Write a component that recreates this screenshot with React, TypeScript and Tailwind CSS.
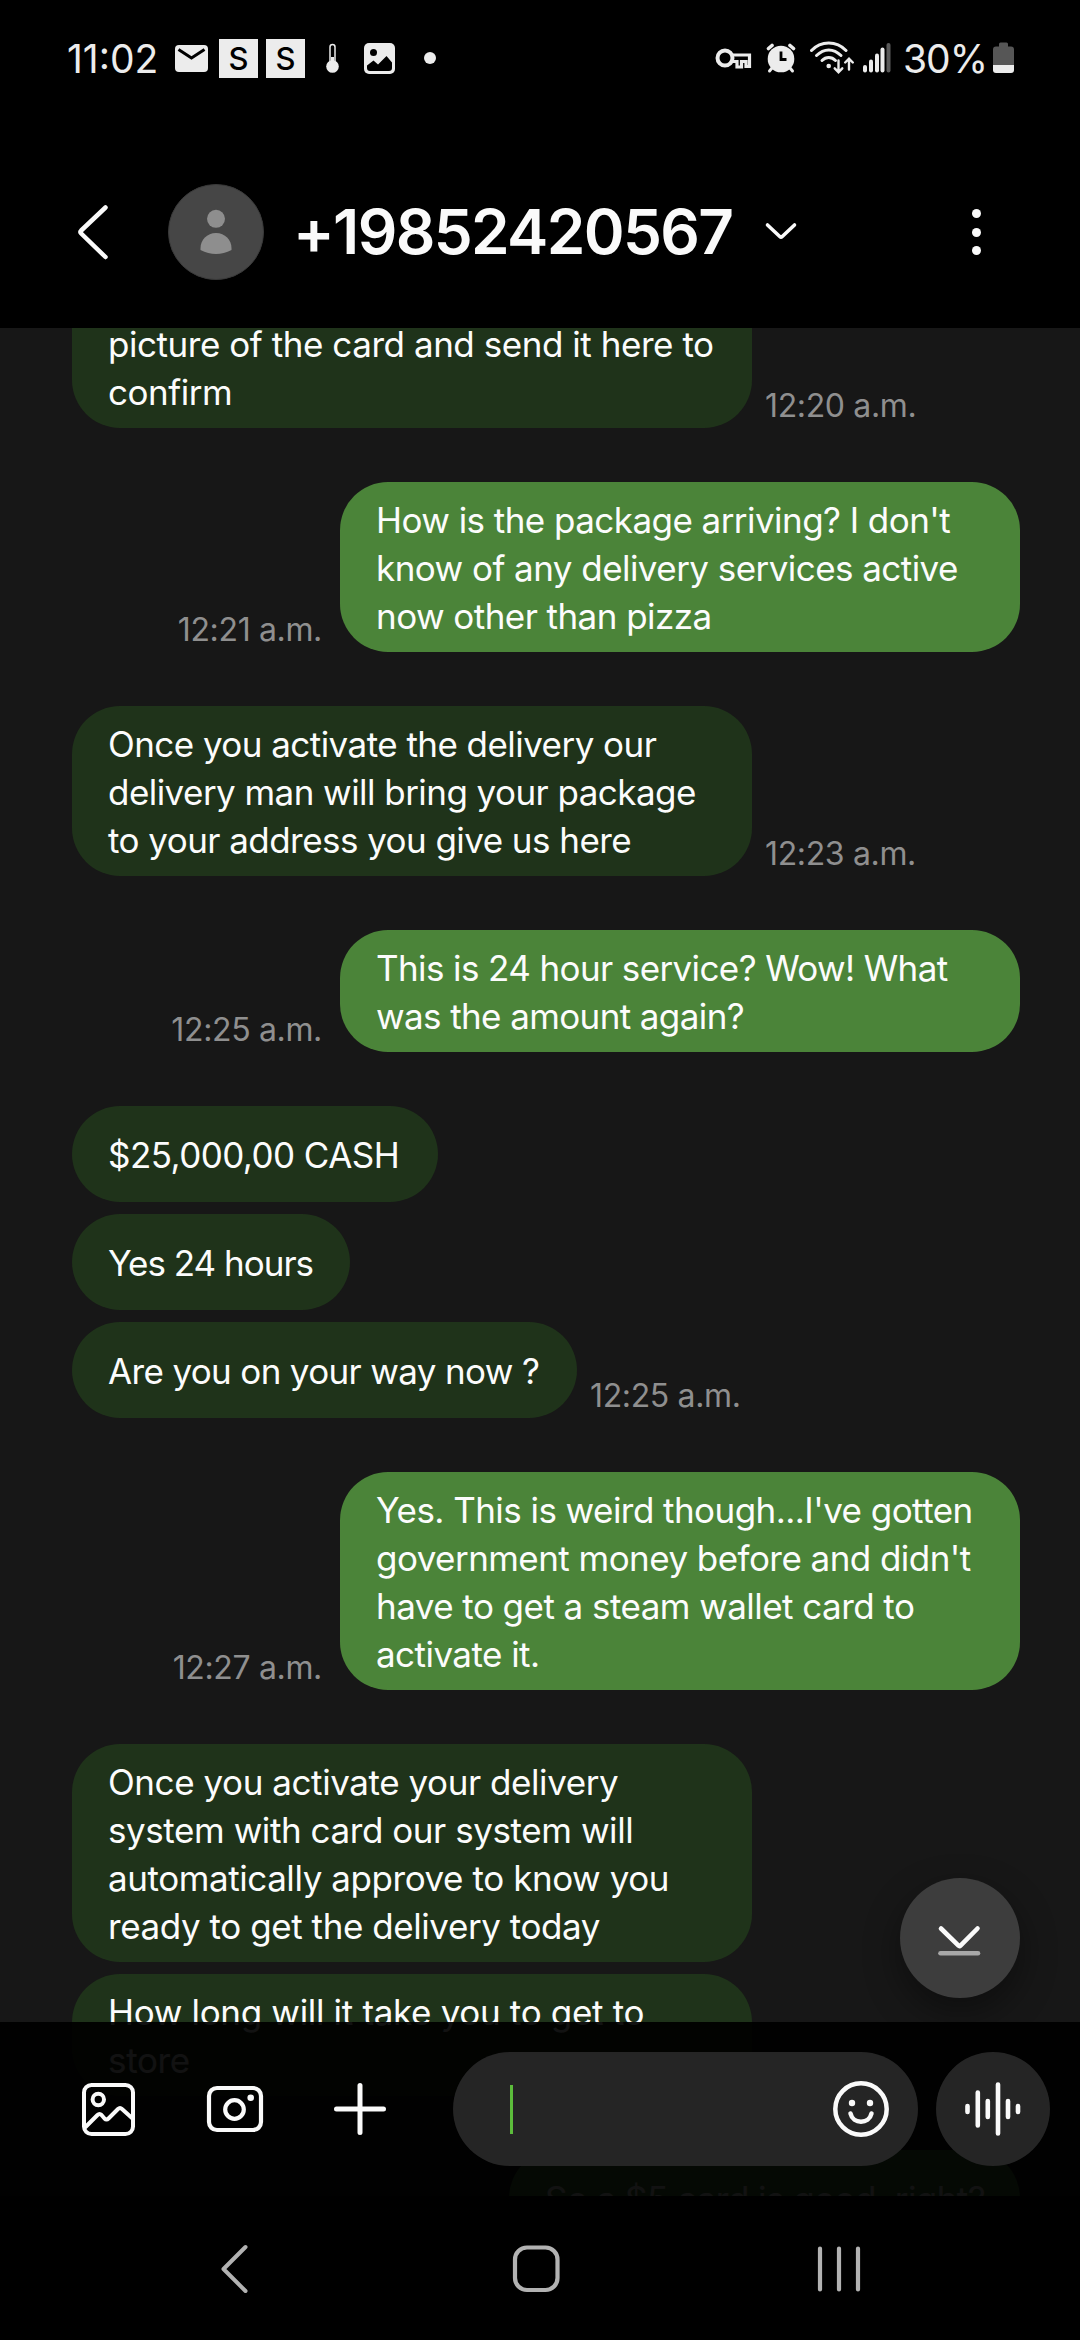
import clsx from "clsx";

type Message = {
  lines: string[];
  width: string;
  tracking?: string;
  time?: string;
};

type Group = {
  sent?: boolean;
  messages: Message[];
};

const WIDE = "w-[680px]";

const conversation: Group[] = [
  {
    messages: [
      {
        lines: ["picture of the card and send it here to", "confirm"],
        width: "w-[680px] rounded-t-none",
        tracking: "tracking-[-0.45px]",
        time: "12:20 a.m.",
      },
    ],
  },
  {
    sent: true,
    messages: [
      {
        lines: [
          "How is the package arriving? I don't",
          "know of any delivery services active",
          "now other than pizza",
        ],
        width: WIDE,
        time: "12:21 a.m.",
      },
    ],
  },
  {
    messages: [
      {
        lines: [
          "Once you activate the delivery our",
          "delivery man will bring your package",
          "to your address you give us here",
        ],
        width: WIDE,
        time: "12:23 a.m.",
      },
    ],
  },
  {
    sent: true,
    messages: [
      {
        lines: ["This is 24 hour service? Wow! What", "was the amount again?"],
        width: WIDE,
        tracking: "tracking-[-0.61px]",
        time: "12:25 a.m.",
      },
    ],
  },
  {
    messages: [
      { lines: ["$25,000,00 CASH"], width: "w-[366px]" },
      { lines: ["Yes 24 hours"], width: "w-[278px]", tracking: "tracking-[-1px]" },
      {
        lines: ["Are you on your way now ?"],
        width: "w-[505px]",
        tracking: "tracking-[-0.65px]",
        time: "12:25 a.m.",
      },
    ],
  },
  {
    sent: true,
    messages: [
      {
        lines: [
          "Yes. This is weird though...I've gotten",
          "government money before and didn't",
          "have to get a steam wallet card to",
          "activate it.",
        ],
        width: WIDE,
        time: "12:27 a.m.",
      },
    ],
  },
  {
    messages: [
      {
        lines: [
          "Once you activate your delivery",
          "system with card our system will",
          "automatically approve to know you",
          "ready to get the delivery today",
        ],
        width: WIDE,
        tracking: "tracking-[-0.43px]",
      },
      {
        lines: ["How long will it take you to get to", "store"],
        width: WIDE,
        tracking: "tracking-[-0.33px]",
      },
    ],
  },
  {
    sent: true,
    messages: [{ lines: ["So a $5 card is good, right?"], width: "w-[511px]" }],
  },
];

function Bubble({ message, sent }: { message: Message; sent?: boolean }) {
  return (
    <div className={clsx("flex items-end", sent ? "flex-row-reverse gap-[18px]" : "gap-[13px]")}>
      <div
        className={clsx(
          "flex min-h-24 flex-col justify-center rounded-[48px] pt-[14px] pb-3 pl-9 text-[35px] leading-[48px] whitespace-nowrap text-[#fcfcfc]",
          sent ? "bg-[#4b8439]" : "bg-[#1f331a]",
          message.tracking ?? "tracking-[-0.55px]",
          message.width,
        )}
      >
        {message.lines.map((line) => (
          <p key={line}>{line}</p>
        ))}
      </div>
      {message.time && (
        <span className="pb-[2px] text-[32px] leading-10 tracking-[-0.35px] text-[#8f8f8f]">
          {message.time}
        </span>
      )}
    </div>
  );
}

function StatusBar() {
  return (
    <div className="flex h-[116px] items-center pr-[66px] pl-[67px] text-[#ececec]">
      <span className="w-[92px] text-[39px] leading-none">11:02</span>
      <svg className="ml-4 h-10 w-[33px]" viewBox="0 0 33 40" fill="none">
        <rect y="7" width="33" height="27" rx="4" fill="#ececec" />
        <path d="M3.5 11.5 16.5 20 29.5 11.5" stroke="#000" strokeWidth="3" />
      </svg>
      <span className="ml-[11px] flex size-[39px] items-center justify-center bg-[#ececec] text-[31px] leading-none font-medium text-black">
        S
      </span>
      <span className="ml-2 flex size-[39px] items-center justify-center bg-[#ececec] text-[31px] leading-none font-medium text-black">
        S
      </span>
      <svg className="ml-[21px] h-10 w-[13px]" viewBox="0 0 13 40" fill="none">
        <path d="M4 24V9a2.5 2.5 0 0 1 5 0v15" stroke="#ececec" strokeWidth="1.5" />
        <path d="M5 19h3v6H5z" fill="#ececec" />
        <circle cx="6.5" cy="28.5" r="6.3" fill="#ececec" />
      </svg>
      <svg className="ml-[25px] h-10 w-[31px]" viewBox="0 0 31 40">
        <rect y="5" width="31" height="31" rx="5" fill="#ececec" />
        <circle cx="9.5" cy="14.5" r="3.5" fill="#000" />
        <path d="M3 27.5 9.5 22.5 14 26.5 22.5 18 28 24.5V30q0 3-3 3H6q-3 0-3-3z" fill="#000" />
      </svg>
      <span className="ml-[29px] size-3 rounded-full bg-[#ececec]" />

      <div className="ml-auto flex items-center">
        <svg className="h-10 w-[37px]" viewBox="0 0 37 40" fill="none" stroke="#ececec" strokeWidth="4">
          <circle cx="10" cy="20" r="7.5" />
          <path d="M17.3 17H34.5V28.5H31V23.5H26.5V29H22V23.5H16.5" strokeWidth="3.2" />
        </svg>
        <svg className="ml-[14px] h-10 w-[30px]" viewBox="0 0 30 40" fill="none" stroke="#ececec" strokeLinecap="round">
          <circle cx="15" cy="21" r="13.3" fill="#ececec" stroke="none" />
          <path d="M2.5 10.5 6 7.5M27.5 10.5 24 7.5" strokeWidth="3.6" />
          <path d="M6 30 3.5 33M24 30 26.5 33" strokeWidth="3" />
          <path d="M15 13.5V21.5H20.5" stroke="#000" strokeWidth="2.8" strokeLinecap="butt" />
        </svg>
        <svg className="ml-[14px] h-10 w-[44px]" viewBox="0 0 44 40" fill="none" stroke="#ececec" strokeWidth="3" strokeLinecap="round">
          <path d="M1.5 12.5C11 2.5 26.5 2.5 36 12.5" />
          <path d="M6.5 17.5C14 10 23.5 10 31 17.5" />
          <path d="M12 22.5C16 18.5 21.5 18.5 25.5 22.5" />
          <circle cx="18.7" cy="28" r="2.3" fill="#ececec" stroke="none" />
          <path d="M28.5 22.5V34M24.7 30.3 28.5 34.2 32.3 30.3" strokeWidth="2.4" />
          <path d="M39 31.5V20.8M35.2 24.5 39 20.6 42.8 24.5" strokeWidth="2.4" />
        </svg>
        <svg className="ml-[9px] h-10 w-[28px]" viewBox="0 0 28 40" fill="#ececec">
          <rect x="0" y="27" width="4" height="7.5" rx="2" />
          <rect x="6" y="21.5" width="4" height="13" rx="2" />
          <rect x="12" y="15.5" width="4" height="19" rx="2" />
          <rect x="17.5" y="9.5" width="4" height="25" rx="2" />
          <rect x="23.5" y="5" width="4" height="29.5" rx="2" fill="#5a5a5a" />
        </svg>
        <span className="ml-[12px] w-[86px] text-[39px] leading-none tracking-[-1px]">30%</span>
        <svg className="ml-[4px] h-10 w-[21px]" viewBox="0 0 21 40">
          <path d="M6 8.5V6q0-1.5 1.5-1.5h6Q15 4.5 15 6v2.5h3q3 0 3 3V27H0V11.5q0-3 3-3z" fill="#565656" />
          <path d="M0 27h21v5q0 3-3 3H3q-3 0-3-3z" fill="#ececec" />
        </svg>
      </div>
    </div>
  );
}

function Header() {
  return (
    <header className="h-[328px] shrink-0 bg-black">
      <StatusBar />
      <div className="mt-5 flex h-48 items-center pr-[95px] pl-[72px]">
        <svg className="h-16 w-10" viewBox="0 0 40 64" fill="none" stroke="#fafafa" strokeWidth="4.5" strokeLinecap="round" strokeLinejoin="round">
          <path d="M33.5 7.5 9.2 30.5q-1.5 1.5 0 3L33.5 57" />
        </svg>
        <div className="ml-14 flex size-24 items-center justify-center rounded-full border border-[#3a3a3a] bg-[#464646]">
          <svg className="size-16" viewBox="0 0 64 64" fill="#8e8e8e">
            <circle cx="32" cy="18.8" r="9" />
            <path d="M16.5 48c0-8 6.5-15 15.5-15s15.5 7 15.5 15v2q-15.5 8-31 0z" />
          </svg>
        </div>
        <h1 className="ml-[29px] w-[444px] text-[62px] leading-none font-semibold tracking-[-1.65px] whitespace-nowrap text-[#fafafa]">
          +19852420567
        </h1>
        <svg className="ml-[26px] h-8 w-9" viewBox="0 0 36 32" fill="none" stroke="#fafafa" strokeWidth="3.6" strokeLinecap="round" strokeLinejoin="round">
          <path d="M4.5 9 17 20.7q1 1 2 0L31.5 9" />
        </svg>
        <div className="ml-auto flex w-[17px] flex-col items-center gap-[9.5px]">
          <span className="size-[9px] rounded-full bg-[#fafafa]" />
          <span className="size-[9px] rounded-full bg-[#fafafa]" />
          <span className="size-[9px] rounded-full bg-[#fafafa]" />
        </div>
      </div>
    </header>
  );
}

function Composer() {
  return (
    <div className="absolute inset-x-0 bottom-0 flex h-[174px] items-center bg-black/93 pl-[76px]">
      <svg className="size-16" viewBox="0 0 64 64" fill="none" stroke="#fafafa" strokeWidth="4" strokeLinejoin="round">
        <rect x="8" y="8" width="49" height="49" rx="7.5" />
        <circle cx="22.3" cy="22.5" r="5.7" />
        <path d="M9 50.5 21.5 38q2-2 4 0l3 3.5q2 2 4 0L42 32q2-2 4 0L56.5 41.5" />
      </svg>
      <svg className="ml-[63px] size-16" viewBox="0 0 64 64" fill="none" stroke="#fafafa" strokeWidth="4.2">
        <rect x="6" y="11" width="52" height="42" rx="8" />
        <circle cx="31.5" cy="32.5" r="9.3" />
        <circle cx="47.7" cy="20.8" r="3.3" fill="#fafafa" stroke="none" />
      </svg>
      <svg className="ml-[61px] size-16" viewBox="0 0 64 64" fill="none" stroke="#fafafa" strokeWidth="5" strokeLinecap="round">
        <path d="M32 8.5V55.5M8.5 32H55.5" />
      </svg>
      <div className="ml-[61px] flex h-[114px] w-[465px] items-center justify-between rounded-full bg-[#252525] pr-[25px] pl-[57px]">
        <span className="h-[49px] w-[3px] bg-[#5cbc3b]" />
        <svg className="size-16" viewBox="0 0 64 64" fill="none" stroke="#fafafa" strokeWidth="4.5" strokeLinecap="round">
          <circle cx="32" cy="32" r="25.7" />
          <path d="M21.5 36.5C24 47.5 40 47.5 42.5 36.5" />
          <circle cx="23" cy="26" r="3.2" fill="#fafafa" stroke="none" />
          <circle cx="41" cy="26" r="3.2" fill="#fafafa" stroke="none" />
        </svg>
      </div>
      <div className="ml-[18px] flex size-[114px] items-center justify-center rounded-full bg-[#252525]">
        <svg className="size-16" viewBox="0 0 64 64" fill="none" stroke="#fafafa" strokeWidth="4.6" strokeLinecap="round">
          <path d="M6.5 29V35M16.8 15.5V48.5M26.8 24V40M37 7.5V56.5M47 24V40M57 29V35" />
        </svg>
      </div>
    </div>
  );
}

function NavBar() {
  return (
    <nav className="flex h-36 shrink-0 items-center bg-black pl-[202px]">
      <svg className="size-16" viewBox="0 0 64 64" fill="none" stroke="#b2b2b2" strokeWidth="4" strokeLinecap="round" strokeLinejoin="round">
        <path d="M43.5 11 21.5 33 43.5 55" />
      </svg>
      <svg className="ml-[238px] size-16" viewBox="0 0 64 64" fill="none" stroke="#b2b2b2" strokeWidth="4.2">
        <rect x="11" y="11.5" width="42.5" height="42.5" rx="12" />
      </svg>
      <svg className="ml-[239px] size-16" viewBox="0 0 64 64" fill="none" stroke="#b2b2b2" strokeWidth="4.2" strokeLinecap="round">
        <path d="M13 12.5V53.5M32 12.5V53.5M51 12.5V53.5" />
      </svg>
    </nav>
  );
}

export default function App() {
  return (
    <div className="flex h-[2340px] w-[1080px] flex-col overflow-hidden bg-[#171717] font-['Inter','Noto_Sans',sans-serif]">
      <Header />

      <main className="relative h-[1868px] overflow-hidden">
        {/* Conversation, scrolled part way through the first bubble */}
        <div className="-mt-[22px] flex flex-col gap-[54px] pr-[60px] pl-[72px]">
          {conversation.map((group, i) => (
            <div key={i} className="flex flex-col gap-3">
              {group.messages.map((message) => (
                <Bubble key={message.lines[0]} message={message} sent={group.sent} />
              ))}
            </div>
          ))}
        </div>

        {/* Jump to latest */}
        <button className="absolute right-[60px] bottom-[198px] flex size-[120px] items-center justify-center rounded-full bg-[#3d3d3d] shadow-[0_14px_36px_rgba(0,0,0,0.4)]">
          <svg className="size-16" viewBox="0 0 64 64" fill="none" strokeWidth="4.6" strokeLinecap="round" strokeLinejoin="round">
            <path d="M13 22.5 30.5 39.7q1 1 2 0L49.5 22.5" stroke="#fafafa" />
            <path d="M12.5 47.3H50" stroke="#a8a8a8" />
          </svg>
        </button>

        <Composer />
      </main>

      <NavBar />
    </div>
  );
}
